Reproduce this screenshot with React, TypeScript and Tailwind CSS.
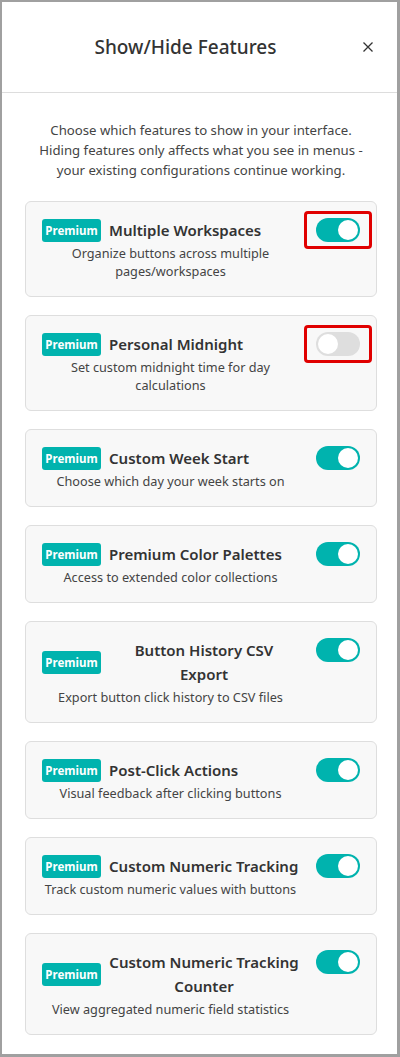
import React, { useState } from 'react';

interface Feature {
  id: string;
  title: string;
  description: string;
  enabled: boolean;
  highlighted?: boolean;
}

const initialFeatures: Feature[] = [
  { id: 'workspaces', title: 'Multiple Workspaces', description: 'Organize buttons across multiple pages/workspaces', enabled: true, highlighted: true },
  { id: 'midnight', title: 'Personal Midnight', description: 'Set custom midnight time for day calculations', enabled: false, highlighted: true },
  { id: 'weekstart', title: 'Custom Week Start', description: 'Choose which day your week starts on', enabled: true },
  { id: 'palettes', title: 'Premium Color Palettes', description: 'Access to extended color collections', enabled: true },
  { id: 'csv', title: 'Button History CSV Export', description: 'Export button click history to CSV files', enabled: true },
  { id: 'postclick', title: 'Post-Click Actions', description: 'Visual feedback after clicking buttons', enabled: true },
  { id: 'numeric', title: 'Custom Numeric Tracking', description: 'Track custom numeric values with buttons', enabled: true },
  { id: 'counter', title: 'Custom Numeric Tracking Counter', description: 'View aggregated numeric field statistics', enabled: true },
];

function Toggle({ on, onClick }: { on: boolean; onClick: () => void }) {
  return (
    <button
      type="button"
      onClick={onClick}
      className={`relative block w-[44px] h-[24px] rounded-full shrink-0 ${on ? 'bg-[#00b3ae]' : 'bg-[#dedede]'}`}
    >
      <span
        className={`absolute top-[2px] w-[20px] h-[20px] rounded-full bg-white ${on ? 'left-[22px]' : 'left-[2px]'}`}
      />
    </button>
  );
}

function FeatureCard({ feature, onToggle }: { feature: Feature; onToggle: () => void }) {
  return (
    <div className="flex items-start gap-[17px] bg-[#f8f8f8] border border-[#dedede] rounded-[6px] p-4">
      <div className="flex-1 min-w-0">
        <div className="flex items-center gap-2">
          <span className="shrink-0 bg-[#00b3ae] text-white text-[11.5px] font-bold leading-[23px] h-[23px] w-[59px] text-center rounded-[3px]">
            Premium
          </span>
          <span className="text-[15px] leading-[24px] font-semibold text-[#333] text-center">
            {feature.title}
          </span>
        </div>
        <div className="mt-[2px] text-[12.7px] leading-[18px] text-[#444] text-center">
          {feature.description}
        </div>
      </div>
      <div className="relative shrink-0">
        {feature.highlighted && (
          <div className="absolute -left-[12px] -right-[12px] -top-[7px] -bottom-[7px] border-[3px] border-[#e00000] rounded-[4px] pointer-events-none" />
        )}
        <Toggle on={feature.enabled} onClick={onToggle} />
      </div>
    </div>
  );
}

export default function App() {
  const [features, setFeatures] = useState(initialFeatures);

  const toggle = (id: string) =>
    setFeatures(prev => prev.map(f => (f.id === id ? { ...f, enabled: !f.enabled } : f)));

  return (
    <div className="h-[1057px] w-[400px] bg-white border-t-2 border-l-2 border-r-[3px] border-b-[3px] border-[#a0a0a0] overflow-hidden font-['Noto_Sans','Open_Sans',sans-serif]">
      {/* Header */}
      <div className="flex items-center h-[91px] border-b border-[#dddddd] pl-[16px] pr-[14px]">
        <h2 className="flex-1 text-center text-[19px] font-medium text-[#333]">Show/Hide Features</h2>
        <button type="button" className="w-[30px] h-[30px] flex items-center justify-center text-[#333]">
          <svg width="10" height="10" viewBox="0 0 10 10">
            <path d="M0.5 0.5 L9.5 9.5 M9.5 0.5 L0.5 9.5" stroke="currentColor" strokeWidth="1.3" />
          </svg>
        </button>
      </div>

      {/* Body */}
      <div className="pl-[23px] pr-[20px]">
        <p className="pt-[27px] mb-[21px] px-[10px] text-[13.2px] leading-[20px] text-[#444] text-center">
          Choose which features to show in your interface. Hiding features only affects what you see in menus - your existing configurations continue working.
        </p>
        <div className="flex flex-col gap-[18px]">
          {features.map(f => (
            <FeatureCard key={f.id} feature={f} onToggle={() => toggle(f.id)} />
          ))}
        </div>
      </div>
    </div>
  );
}
